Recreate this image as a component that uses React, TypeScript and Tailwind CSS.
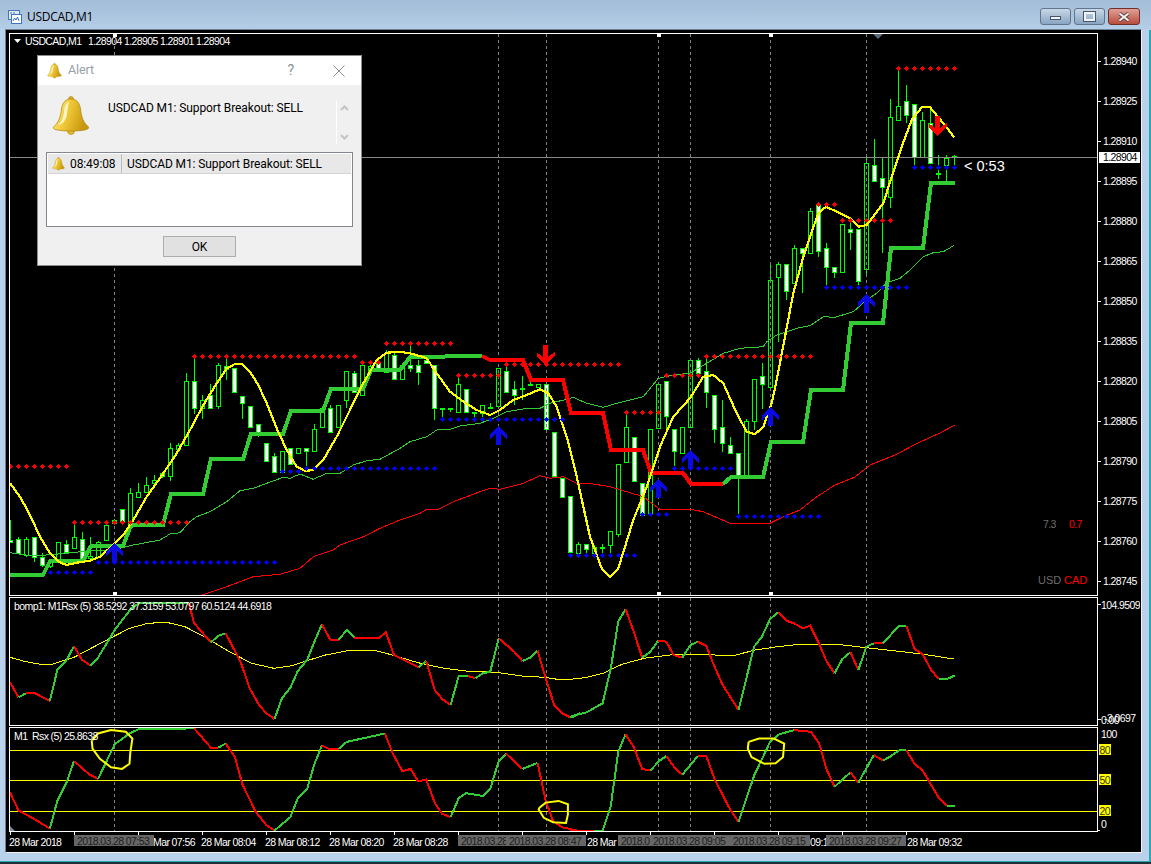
import React from "react";

type S = [string, number[]];
const RED = "#ff0000";
const LIME = "#32cd32";

const pts = (ox: number, oy: number, sx: number, sy: number, a: number[]) => {
  const out: string[] = [];
  for (let i = 0; i < a.length; i += 2) out.push(`${(ox + a[i] / sx).toFixed(1)},${(oy + a[i + 1] / sy).toFixed(1)}`);
  return out.join(" ");
};

const candles: number[][] = [
[10,520,543,540,542,1],[18,537,553,539,553,1],[26,537,557,539,555,0],[34,537,562,537,557,1],[42,553,567,557,565,1],[50,560,568,562,566,0],[58,542,563,542,562,0],[66,540,553,544,552,1],[74,523,548,537,548,0],[82,532,560,539,560,1],[90,537,558,556,558,0],[98,541,558,542,557,0],[106,525,541,525,540,0],[114,519,525,520,523,0],[122,509,522,509,521,1],[130,488,528,493,527,0],[138,483,497,492,497,0],[146,477,492,485,492,0],[154,475,484,480,483,0],[162,473,478,473,476,1],[170,443,481,448,476,0],[178,443,449,445,449,0],[186,373,445,381,445,0],[194,358,414,381,408,1],[202,395,419,400,408,0],[210,384,408,395,408,1],[218,363,409,365,406,0],[226,358,380,366,369,1],[234,368,392,368,392,1],[242,396,419,396,403,1],[250,406,427,406,427,1],[258,424,437,424,433,1],[266,443,461,443,461,1],[274,453,472,456,472,1],[282,451,472,451,472,0],[290,448,464,448,464,1],[298,448,453,448,453,0],[306,448,468,448,451,1],[314,424,451,429,451,0],[322,408,427,408,427,0],[330,405,432,408,432,1],[338,405,427,405,427,0],[346,371,408,371,400,0],[354,371,392,373,392,1],[362,365,395,365,395,0],[370,362,375,366,370,0],[378,360,372,362,368,1],[386,350,372,353,372,0],[394,353,379,355,379,1],[402,365,379,365,379,0],[410,343,372,365,368,1],[418,360,385,365,372,1],[426,358,364,360,363,1],[434,365,420,365,408,1],[442,408,418,408,409,0],[450,408,412,408,409,0],[458,377,412,384,412,0],[466,389,412,389,412,1],[474,412,417,412,413,0],[482,405,420,405,413,0],[490,403,409,407,408,0],[498,368,406,368,406,0],[506,360,392,371,392,1],[514,381,405,389,395,1],[522,376,400,388,389,0],[530,380,385,384,385,0],[538,384,387,384,387,0],[546,384,429,384,429,1],[554,432,476,432,476,1],[562,478,497,478,497,1],[570,496,552,496,552,1],[578,542,553,544,553,0],[586,544,553,544,549,1],[594,545,553,547,553,0],[602,544,553,547,548,0],[610,531,553,531,545,0],[618,464,537,464,534,0],[626,413,462,427,462,0],[634,437,481,437,481,1],[642,483,515,483,515,1],[650,429,513,429,513,0],[658,384,428,384,428,0],[666,381,429,381,416,1],[674,429,467,429,451,1],[682,427,453,427,453,0],[690,360,427,360,427,0],[698,358,373,360,373,1],[706,357,408,371,392,1],[714,395,443,395,429,1],[722,400,452,427,443,1],[730,437,453,445,453,1],[738,453,515,453,476,1],[746,419,476,421,476,0],[754,379,430,379,421,0],[762,363,409,376,384,1],[770,262,387,280,387,0],[778,262,342,264,277,0],[786,264,300,264,291,1],[794,245,283,248,283,0],[802,248,293,248,253,1],[810,208,253,211,253,0],[818,203,257,205,251,1],[826,243,285,248,267,1],[834,267,278,267,272,1],[842,224,272,224,272,0],[850,223,250,229,232,1],[858,229,285,229,281,1],[866,157,274,163,269,0],[874,139,181,165,181,1],[882,157,253,178,187,1],[890,99,208,117,197,0],[898,70,120,106,120,0],[906,85,123,101,115,1],[914,104,167,104,157,1],[922,112,157,120,157,0],[930,108,163,123,163,1],[938,155,179,173,174,0],[946,155,182,158,165,0],[954,155,165,156,157,0],
];

const redDots = [[10,66,466],[74,186,522],[194,354,356],[362,378,362],[386,450,343],[458,498,375],[506,618,364],[626,658,412],[666,698,375],[706,810,356],[818,834,204],[842,890,220],[898,954,68]];
const blueDots = [[50,90,572],[98,274,562],[282,298,471],[306,434,468],[442,562,419],[570,634,555],[642,666,514],[674,730,468],[738,818,516],[826,906,287],[914,954,167]];
const vlines = [114, 498, 546, 658, 690, 770, 866];
const upArrows = [[114,543],[498,426],[658,479],[690,450],[770,407],[866,294]];
const downArrows = [[545,365],[937,136]];

const yellow = [
  pts(0,340,3,3,[30,430,60,470,90,525,120,590,150,640,175,665,200,675,230,668,270,662,300,650,340,615,370,585,400,540,440,470,490,400,530,340,570,270,610,195,650,130,680,85,705,72,725,72,750,95,775,135,800,190,830,265,860,330,890,380,915,393,940,390,970,360,1010,290,1050,210,1090,130,1130,60,1160,38,1200,35]),
  pts(400,340,3,3,[40,42,80,55,110,100,150,155,190,185,230,210,270,225,300,210,340,180,380,165,420,148,445,160,470,200,500,290,530,410,570,590,605,685,630,712,655,685,700,540,740,440,780,320,820,230,870,175,910,110,940,105,970,130,1010,220,1040,275,1065,283,1090,260,1115,190]),
  pts(720,60,3,3,[170,960,195,830,220,700,250,590,270,530,295,460,318,440,350,455,390,475,415,500,440,495,490,430,515,350,545,260,575,180,605,142,630,142,670,190,703,232]),
].join(" ");

const thinGreen = [
  pts(0,340,3,3,[30,638,100,648,200,640,270,632,340,630,400,615,480,600,510,582,540,578,570,545,590,530,630,515,680,485,720,452,760,445,800,430,850,412,870,415,900,402,940,418,980,400,1020,400,1060,375,1100,362,1140,358,1200,325]),
  pts(400,340,3,3,[30,305,80,290,110,270,150,268,180,258,240,250,280,235,320,215,380,205,420,205,450,190,500,178,520,172,560,190,610,202,650,190,730,170,775,115,820,105,870,100,920,70,970,40,1020,25,1090,20]),
  pts(720,60,3,3,[140,845,170,825,230,805,270,797,310,770,345,772,400,755,440,720,470,700,500,668,540,655,570,630,610,590,640,578,670,575,703,556]),
].join(" ");

const thinRed = [
  pts(0,340,3,3,[605,765,680,740,760,710,840,703,900,685,940,650,1000,630,1020,615,1090,590,1140,565,1200,540]),
  pts(400,340,3,3,[60,520,80,508,110,510,160,485,240,455,270,445,300,448,370,430,420,407,450,415,490,410,530,430,580,432,630,440,680,455,730,470,780,508,870,508,910,515,990,550,1110,550,1150,530,1200,510]),
  "815,498 835,485 855,477 870,465 895,455 920,442 940,433 955,425",
].join(" ");

const step: S[] = [
  [LIME, [10,575,43,575,50,561,83,561,91,546,123,546,131,525,163,525,171,494,203,494,211,459,243,459,251,434,283,434,291,411,323,411,331,389,363,389,371,370,400,370,410,357,482,356]],
  [RED, [482,356,490,360,523,360,531,380,563,380,571,413,603,413,611,450,643,450,651,473,683,473,691,484,723,484]],
  [LIME, [723,484,731,477,763,477,771,442,803,442,811,390,843,390,851,323,883,323,891,248,923,248,931,183,955,183]],
];

const mid: [string, number, number[]][] = [
  [RED,0,[27,262,50,307]],[LIME,0,[50,307,70,295]],[RED,0,[70,295,95,295,135,318]],[LIME,0,[135,318,155,225,180,195,200,153]],[RED,0,[200,153,222,195,245,212]],[LIME,0,[245,212,265,188,310,105,355,40,375,25,510,25]],[RED,0,[510,25,525,85,570,142]],[LIME,0,[570,142,590,122,610,115]],[RED,0,[610,115,650,200,675,280,700,330,720,355,742,372]],[LIME,0,[742,372,762,310,785,278,805,228,830,195,850,140,870,88]],[RED,0,[870,88,893,135,915,135]],[LIME,0,[915,135,937,105,958,128]],[RED,0,[958,128,1025,128,1043,112,1065,180,1132,217]],[LIME,0,[1132,217,1152,197]],[RED,0,[1152,197,1175,285,1195,312,1218,330]],[LIME,0,[1218,330,1240,243,1265,243]],[RED,0,[1265,243,1285,250]],[LIME,0,[1285,250,1305,235,1325,230,1348,130]],[RED,0,[1348,130,1390,170,1412,198]],[LIME,0,[1412,198,1435,187,1453,167]],[RED,0,[1453,167,1475,250,1498,330,1520,355,1543,368]],[LIME,0,[1543,368,1568,355]],
  [LIME,1,[0,365,45,352,88,325,110,220,130,80,150,42]],[RED,1,[150,42,172,110,195,188]],[LIME,1,[195,188,217,170,238,137]],[RED,1,[238,137,260,140,280,180,303,188]],[LIME,1,[303,188,325,150,345,140]],[RED,1,[345,140,368,153,390,215,410,265,432,305,455,345]],[LIME,1,[455,345,497,155,518,125,540,72,562,52]],[RED,1,[562,52,585,78,605,85,628,100,648,92,672,145,692,198,714,235]],[LIME,1,[714,235,735,192,757,172]],[RED,1,[757,172,778,225]],[LIME,1,[778,225,800,155,820,145]],[RED,1,[820,145,845,145]],[LIME,1,[845,145,888,92,908,92]],[RED,1,[908,92,930,162,952,178,975,225,995,252]],[LIME,1,[995,252,1017,252,1038,242]],
];

const low: [string, number, number[]][] = [
  [RED,0,[27,215,50,268,90,292,135,322]],[LIME,0,[135,322,155,240,180,185,200,122]],[RED,0,[200,122,240,160,265,175]],[LIME,0,[265,175,310,72,350,40,375,27,525,25]],[RED,0,[525,25,570,82,590,82]],[LIME,0,[590,82,610,70]],[RED,0,[610,70,635,110,655,190,690,270,720,312,742,328]],[LIME,0,[742,328,785,288,805,232,830,205,850,130,870,76]],[RED,0,[870,76,890,86,915,86]],[LIME,0,[915,86,937,65,1040,40]],[RED,0,[1040,40,1062,100,1088,152,1110,145,1130,182,1152,176,1175,245,1195,278,1218,288]],[LIME,0,[1218,288,1240,232,1260,217,1305,225,1325,205,1348,122,1368,100]],[RED,0,[1368,100,1412,145]],[LIME,0,[1412,145,1453,127]],[RED,0,[1453,127,1475,240,1495,300,1520,318,1568,330]],
  [RED,1,[0,328,65,328]],[LIME,1,[65,328,88,328,110,255,130,95,150,42]],[RED,1,[150,42,172,80,195,145,217,150]],[LIME,1,[217,150,240,122,260,107]],[RED,1,[260,107,285,145,303,162]],[LIME,1,[303,162,345,107]],[RED,1,[345,107,368,107,390,175,432,265,455,302]],[LIME,1,[455,302,497,165,540,65,565,42,605,30]],[RED,1,[605,30,650,35,672,68,692,145,714,198]],[LIME,1,[714,198,757,155]],[RED,1,[757,155,778,186]],[LIME,1,[778,186,820,104]],[RED,1,[820,104,845,120]],[LIME,1,[845,120,865,108,888,90,908,90]],[RED,1,[908,90,930,130,952,150,995,230,1017,255]],[LIME,1,[1017,255,1038,255]],
];

const midYellow = pts(0,595,2.703,3,[27,187,70,200,110,208,140,208,200,187,280,140,350,100,400,85,450,82,500,95,560,130,620,170,680,205,740,220,790,212,830,197,880,180,950,165,1010,165,1060,180,1130,203,1200,220,1260,228,1340,232,1410,243,1470,247,1520,255]) + " " + pts(570,595,2.699,3,[0,253,40,248,90,235,140,208,200,190,270,180,340,178,440,182,500,165,560,155,620,148,720,148,800,158,880,168,950,177,1035,192]);

const range = (a: number, b: number) => { const r: number[] = []; for (let x = a; x <= b; x += 8) r.push(x); return r; };

const dot = (x: number, y: number) => `M${x} ${y - 2}h1v1h1v1h1v1h-1v1h-1v1h-1v-1h-1v-1h-1v-1h1v-1h1z`;

function Bell({ className }: { className: string }) {
  const id = React.useId();
  return (
    <svg viewBox="0 0 38 40" className={className}>
      <defs>
        <linearGradient id={id} x1="0" y1="0" x2="1" y2="0.3">
          <stop offset="0" stopColor="#fff3a0" />
          <stop offset="0.45" stopColor="#f2cc3a" />
          <stop offset="1" stopColor="#c9980f" />
        </linearGradient>
      </defs>
      <circle cx="19" cy="3" r="2.5" fill="#e0b020" stroke="#a9820f" strokeWidth="0.6" />
      <circle cx="19" cy="35" r="3.5" fill="#e5bb2c" stroke="#a9820f" strokeWidth="0.6" />
      <path d="M19 3C13 3 10.500 7 9.500 13C8.500 21 7 26 1.500 31C0 33.500 7 35 19 35C31 35 38 33.500 36.500 31C31 26 29.500 21 28.500 13C27.500 7 25 3 19 3Z" fill={`url(#${id})`} stroke="#a9820f" strokeWidth="0.7" />
      <path d="M17 6C13.500 7 12.500 11 12 16C11.500 21 10 25 6.500 29C11 28 14 24 15 18C15.500 13 16 9 17 6Z" fill="#fffbe0" opacity="0.85" />
    </svg>
  );
}

const axisText = "font-['Liberation_Sans',sans-serif] text-[10.5px] tracking-[-0.6px]";

function Plot({ top, h, children }: { top: number; h: number; children: React.ReactNode }) {
  return (
    <div className="border border-white w-[1089px] shrink-0 box-border" style={{ height: h }}>
      <svg width={1087} height={h - 2} viewBox={`10 ${top + 1} 1087 ${h - 2}`} className="block">{children}</svg>
    </div>
  );
}

function Axis({ top, h, children }: { top: number; h: number; children: React.ReactNode }) {
  return (
    <svg width={42} height={h} viewBox={`1098 ${top} 42 ${h}`} className={`block shrink-0 ${axisText}`}>{children}</svg>
  );
}

const Vlines = ({ top, bottom }: { top: number; bottom: number }) => (
  <g shapeRendering="crispEdges">
    {vlines.map((x) => <line key={x} x1={x + 0.5} x2={x + 0.5} y1={top} y2={bottom} stroke="#808080" strokeDasharray="3 3" />)}
  </g>
);

const segs = (list: [string, number, number[]][], oy: number, sy: number) =>
  list.map(([c, z, a], i) => (
    <polyline key={i} points={z === 0 ? pts(0, oy, 2.703, sy, a) : pts(570, oy, 2.699, sy, a)} fill="none" stroke={c} strokeWidth="2" shapeRendering="crispEdges" />
  ));

const timeLabels: [number, string][] = [[9, "28 Mar 2018"],[153, "Mar 07:56"],[201, "28 Mar 08:04"],[265, "28 Mar 08:12"],[329, "28 Mar 08:20"],[393, "28 Mar 08:28"],[587, "28 Mar"],[810, "09:1"],[907, "28 Mar 09:32"]];
const boxes: [number, string][] = [[114, "2018.03.28 07:53"],[498, "2018.03.28"],[546, "2018.03.28 08:47"],[658, "2018.0"],[690, "2018.03.28 09:05"],[770, "2018.03.28 09:15"],[866, "2018.03.28 09:27"]];

export default function App() {
  return (
    <div className="relative w-[1151px] h-[864px] overflow-hidden bg-[#b9d1ea] font-['Liberation_Sans',sans-serif]">
      {/* title bar */}
      <div className="flex items-center h-[29px] pl-[8px] pr-[11px] bg-linear-to-b from-[#a3bcd7] to-[#b5cee7]">
        <svg width="14" height="14" viewBox="0 0 14 14" className="shrink-0 mt-[4px]">
          <rect x="0.500" y="0.500" width="11" height="9" fill="#dce8f5" stroke="#4a78b0" />
          <rect x="3.500" y="4.500" width="10" height="9" fill="#ffffff" stroke="#3f74c0" />
          <path d="M5 11l1.500-3 1.500 2 1.500-3 1.500 4" fill="none" stroke="#2e6cc8" strokeWidth="1" />
          <path d="M2 3h2M5 3h2" stroke="#4a78b0" />
        </svg>
        <span className="ml-[5px] mt-[4px] text-[12px] leading-none text-black font-['Open_Sans',sans-serif] tracking-[-0.3px]">USDCAD,M1</span>
        <div className="ml-auto flex gap-[3px] mt-[4px]">
          <div className="w-[31px] h-[17px] rounded-[3px] border border-[#61758c] bg-linear-to-b from-[#c8d8e8] to-[#8aa5c2] flex items-center justify-center">
            <div className="w-[11px] h-[4px] bg-[#f0f4f8] border border-[#46566a] mt-[3px]" />
          </div>
          <div className="w-[31px] h-[17px] rounded-[3px] border border-[#61758c] bg-linear-to-b from-[#c8d8e8] to-[#8aa5c2] flex items-center justify-center">
            <div className="w-[11px] h-[9px] bg-transparent border-[2px] border-[#f0f4f8] outline outline-[#46566a]" />
          </div>
          <div className="w-[32px] h-[17px] rounded-[3px] border border-[#70302a] bg-linear-to-b from-[#e0a098] to-[#b84c3c] flex items-center justify-center">
            <svg width="14" height="10" viewBox="0 0 14 10"><path d="M2.500 1.500l9 7M11.500 1.500l-9 7" stroke="#4a3a3a" strokeWidth="3.600" /><path d="M2.500 1.500l9 7M11.500 1.500l-9 7" stroke="#f6f0f0" strokeWidth="2.200" /></svg>
          </div>
        </div>
      </div>

      {/* chart frame */}
      <div className="ml-[5px] w-[1137px] h-[824px] box-border border border-t-[#6f8093] border-l-[#6f8093] border-r-[#f2f2f2] border-b-[#f2f2f2] bg-black pl-[3px] pt-[3px]">
        {/* main pane */}
        <div className="flex">
          <Plot top={33} h={563}>
            <g shapeRendering="crispEdges">
              {candles.map(([x, wt, wb, bt, bb, f]) => (
                <g key={x}>
                  <line x1={x + 0.5} x2={x + 0.5} y1={wt} y2={wb} stroke="#00ff00" />
                  <rect x={x - 1.5} y={bt + 0.5} width={4} height={Math.max(bb - bt, 1)} fill={f ? "#ffffff" : "#000000"} stroke="#00ff00" />
                </g>
              ))}
            </g>
            <Vlines top={34} bottom={595} />
            <line x1="10" x2="1097" y1="157.500" y2="157.500" stroke="#8a8a8a" shapeRendering="crispEdges" />
            <polyline points={thinRed} fill="none" stroke={RED} strokeWidth="1" shapeRendering="crispEdges" />
            <polyline points={thinGreen} fill="none" stroke={LIME} strokeWidth="1" shapeRendering="crispEdges" />
            {step.map(([c, a], i) => <polyline key={i} points={pts(0, 0, 1, 1, a)} fill="none" stroke={c} strokeWidth="4" shapeRendering="crispEdges" />)}
            <polyline points={yellow} fill="none" stroke="#ffff00" strokeWidth="2.200" shapeRendering="crispEdges" />
            <g shapeRendering="crispEdges">
              {redDots.map(([a, b, y]) => range(a, b).map((x) => <path key={`${x}-${y}`} d={dot(x, y)} fill="#ff0000" />))}
              {blueDots.map(([a, b, y]) => range(a, b).map((x) => <path key={`${x}-${y}`} d={dot(x, y)} fill="#0000ff" />))}
              {upArrows.map(([x, y]) => (
                <polygon key={x} fill="#0a0ae6" points={[[0.500,0],[9,8],[9,13],[3,8],[3,19],[-2,19],[-2,8],[-8,13],[-8,8]].map(([a, b]) => `${x + a},${y + b}`).join(" ")} />
              ))}
              {downArrows.map(([x, y]) => (
                <polygon key={x} fill="#ff0000" points={[[0.500,0],[9.500,-9],[9.500,-13],[3,-8],[3,-20],[-2,-20],[-2,-8],[-8.500,-13],[-8.500,-9]].map(([a, b]) => `${x + a},${y + b}`).join(" ")} />
              ))}
              {[114, 658, 770].map((x) => <rect key={x} x={x - 1} y={592} width={4} height={3} fill="#ffffff" />)}
              {[114, 658, 770].map((x) => <rect key={x} x={x - 1} y={34} width={4} height={3} fill="#ffffff" />)}
            </g>
            <polygon points="873,34 883,34 878,39" fill="#5a6a7a" />
            <polygon points="14,39 21,39 17.500,43" fill="#ffffff" />
            <g className={axisText} fill="#ffffff">
              <text x="25" y="45">USDCAD,M1</text>
              <text x="88" y="45">1.28904</text>
              <text x="124" y="45">1.28905</text>
              <text x="160" y="45">1.28901</text>
              <text x="196" y="45">1.28904</text>
            </g>
            <text x="964" y="171" fill="#ffffff" className="font-['Liberation_Sans',sans-serif] text-[14.5px]">&lt; 0:53</text>
            <text x="1043" y="528" fill="#6e6e6e" className={axisText}>7.3</text>
            <text x="1069" y="528" fill="#ff0000" className={axisText}>0.7</text>
            <text x="1038" y="584" fill="#6e6e6e" className="font-['Liberation_Sans',sans-serif] text-[11px]">USD</text>
            <text x="1064" y="584" fill="#ff0000" className="font-['Liberation_Sans',sans-serif] text-[11px]">CAD</text>
          </Plot>
          <Axis top={33} h={563}>
            {Array.from({ length: 14 }, (_, i) => {
              const y = 61 + i * 40;
              const v = (1.2894 - i * 0.00015).toFixed(5);
              return (
                <g key={v}>
                  <rect x="1098" y={y} width="3" height="1" fill="#ffffff" />
                  <text x="1103" y={y + 4} fill="#ffffff">{v}</text>
                </g>
              );
            })}
            <rect x="1099" y="152" width="41" height="11" fill="#ffffff" />
            <text x="1103" y="161" fill="#000000">1.28904</text>
          </Axis>
        </div>
        {/* middle pane */}
        <div className="flex mt-[1px]">
          <Plot top={597} h={129}>
            <Vlines top={598} bottom={726} />
            <polyline points={midYellow} fill="none" stroke="#ffff00" strokeWidth="1" shapeRendering="crispEdges" />
            {segs(mid, 595, 3)}
            <text x="14" y="610" fill="#ffffff" className={axisText}>bomp1: M1Rsx (5) 38.5292 37.3159 53.0797 60.5124 44.6918</text>
          </Plot>
          <Axis top={597} h={129}>
            <rect x="1098" y="604" width="3" height="1" fill="#ffffff" />
            <rect x="1098" y="719" width="3" height="1" fill="#ffffff" />
            <text x="1101" y="609" fill="#ffffff">104.9509</text>
            <text x="1104" y="722" fill="#ffffff">-3.0697</text>
            <text x="1101" y="724" fill="#ffffff">0.00</text>
          </Axis>
        </div>
        {/* lower pane */}
        <div className="flex mt-[1px]">
          <Plot top={727} h={105}>
            <Vlines top={728} bottom={832} />
            <polygon points="10,826 15,831 10,831" fill="#7b8b9b" />
            {[750, 780, 811].map((y) => <line key={y} x1="10" x2="1097" y1={y + 0.5} y2={y + 0.5} stroke="#ffff00" shapeRendering="crispEdges" />)}
            {segs(low, 720, 2.965)}
            <polyline fill="none" stroke="#ffff00" strokeWidth="2" points={pts(0,720,2.703,2.965,[250,60,265,40,300,30,340,35,358,55,352,100,350,130,330,145,300,140,270,115,250,85,248,60])} />
            <polyline fill="none" stroke="#ffff00" strokeWidth="2" points={pts(0,720,2.703,2.965,[1458,260,1475,245,1510,240,1535,250,1535,280,1530,305,1495,303,1470,290,1456,265,1458,260])} />
            <polyline fill="none" stroke="#ffff00" strokeWidth="2" points={pts(570,720,2.699,2.965,[482,65,510,55,550,55,578,70,575,110,555,128,525,130,490,110,480,85,482,65])} />
            <text x="14" y="740" fill="#ffffff" className={axisText}>M1&#160;&#160;Rsx (5) 25.8638</text>
          </Plot>
          <Axis top={727} h={105}>
            <text x="1101" y="738" fill="#ffffff">100</text>
            {[[750, "80"], [780, "50"], [811, "20"]].map(([y, t]) => (
              <g key={t as string}>
                <rect x="1099" y={(y as number) - 6} width="12" height="11" fill="#ffff00" />
                <text x="1099.500" y={(y as number) + 4} fill="#333300">{t}</text>
              </g>
            ))}
            <text x="1101" y="828" fill="#ffffff">0</text>
            <rect x="1097" y="830" width="3" height="1" fill="#ffffff" />
          </Axis>
        </div>
        {/* time axis */}
        <svg width={1131} height={19} viewBox="9 832 1131 19" className={`block ${axisText}`}>
          {Array.from({ length: 15 }, (_, i) => <rect key={i} x={10 + i * 64} y="832" width="1" height="3" fill="#ffffff" />)}
          {timeLabels.map(([x, t]) => <text key={x} x={x} y="846" fill="#ffffff">{t}</text>)}
          {boxes.map(([x, t]) => (
            <g key={x}>
              <rect x={x - 40} y="835" width="80" height="11" fill="#666666" />
              <text x={x - 37} y="845" fill="#1e1e1e">{t}</text>
            </g>
          ))}
        </svg>
      </div>

      {/* bottom edge */}
      <div className="absolute left-0 right-0 top-[861px] h-[1px] bg-[#2aa8b0]" />
      <div className="absolute left-0 right-0 top-[862px] h-[2px] bg-[#20303a]" />
      <div className="absolute right-0 top-[30px] bottom-[3px] w-[2px] bg-[#2aa8b0]" />

      {/* alert dialog */}
      <div className="absolute left-[37px] top-[55px] w-[325px] h-[211px] box-border border border-[#8c8c8c] bg-[#f0f0f0] flex flex-col font-['Roboto',sans-serif] text-[12px] tracking-[-0.1px] text-black">
        <div className="h-[29px] bg-white flex items-center pl-[9px] shrink-0">
          <Bell className="w-[15px] h-[16px]" />
          <span className="ml-[6px] text-[#99a0a8] text-[12.5px]">Alert</span>
          <span className="ml-auto text-[#8a8f96] text-[14px] mr-[39px]">?</span>
          <svg width="12" height="12" viewBox="0 0 12 12" className="mr-[16px]"><path d="M.5.500l11 11M11.500.500l-11 11" stroke="#8a8f96" /></svg>
        </div>
        <div className="flex h-[67px] shrink-0 pl-[14px]">
          <Bell className="w-[38px] h-[40px] mt-[11px]" />
          <span className="ml-[18px] mt-[15px] leading-[16px] whitespace-nowrap">USDCAD M1: Support Breakout: SELL</span>
          <div className="ml-auto mr-[9px] mt-[16px] h-[43px] w-[16px] border-l border-white flex flex-col items-center justify-between py-[4px]">
            <svg width="9" height="6" viewBox="0 0 9 6"><path d="M1 5l3.500-3.500L8 5" fill="none" stroke="#c4c4c4" strokeWidth="2" /></svg>
            <svg width="9" height="6" viewBox="0 0 9 6"><path d="M1 1l3.500 3.500L8 1" fill="none" stroke="#c4c4c4" strokeWidth="2" /></svg>
          </div>
        </div>
        <div className="mx-[8px] h-[75px] box-border border border-[#828790] bg-white p-[1px]">
          <div className="h-[20px] bg-[#e8e8e8] border-b border-[#d4d4d4] flex items-center">
            <div className="w-[74px] h-full border-r border-[#bcbcbc] flex items-center pl-[4px]">
              <Bell className="w-[13px] h-[14px]" />
              <span className="ml-[5px]">08:49:08</span>
            </div>
            <span className="ml-[5px] whitespace-nowrap">USDCAD M1: Support Breakout: SELL</span>
          </div>
        </div>
        <div className="flex justify-center mt-[9px]">
          <div className="w-[73px] h-[21px] box-border border border-[#adadad] bg-[#e1e1e1] flex items-center justify-center">OK</div>
        </div>
      </div>
    </div>
  );
}
